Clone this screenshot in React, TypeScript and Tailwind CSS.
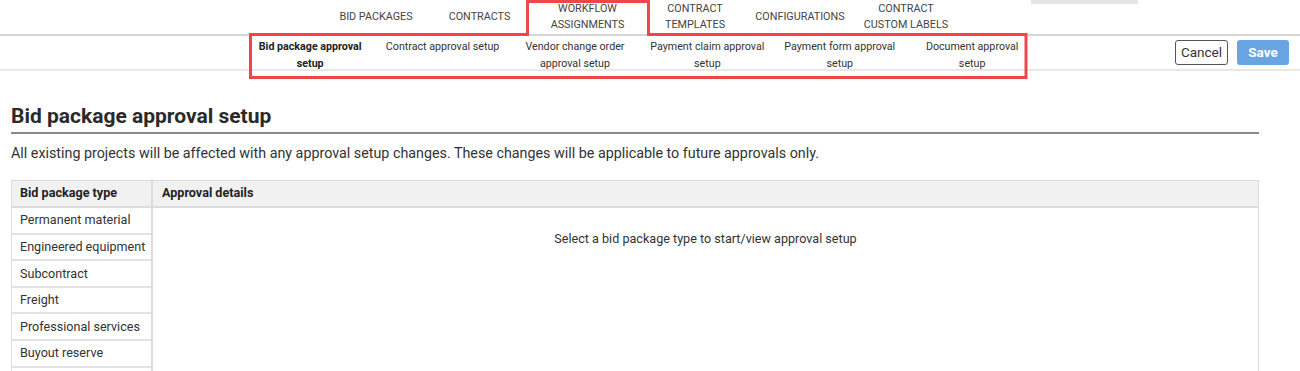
import React from "react";

const topTabs = [
  { label: ["BID PACKAGES"], w: "w-[112px]" },
  { label: ["CONTRACTS"], w: "w-[95px]" },
  { label: ["WORKFLOW", "ASSIGNMENTS"], w: "w-[121px]" },
  { label: ["CONTRACT", "TEMPLATES"], w: "w-[94px]" },
  { label: ["CONFIGURATIONS"], w: "w-[116px]" },
  { label: ["CONTRACT", "CUSTOM LABELS"], w: "w-[96px]" },
];

const subTabs = [
  ["Bid package approval", "setup"],
  ["Contract approval setup"],
  ["Vendor change order", "approval setup"],
  ["Payment claim approval", "setup"],
  ["Payment form approval", "setup"],
  ["Document approval", "setup"],
];

const types = [
  "Permanent material",
  "Engineered equipment",
  "Subcontract",
  "Freight",
  "Professional services",
  "Buyout reserve",
];

export default function App() {
  return (
    <div className="relative h-[371px] w-[1300px] overflow-hidden bg-white font-['Roboto',sans-serif] text-[#333]">
      {/* top nav */}
      <div className="flex h-[34px] pl-[320px]">
        {topTabs.map((t, i) => (
          <div
            key={i}
            className={`flex ${t.w} flex-col items-center justify-center text-[10.8px] leading-[16px] text-[#444]`}
          >
            {t.label.map((l) => (
              <span key={l}>{l}</span>
            ))}
          </div>
        ))}
        <div className="ml-[77px] h-[4px] w-[107px] bg-[#e4e4e4]" />
      </div>
      <div className="h-[2px] bg-[#d6d6d6]" />

      {/* sub nav */}
      <div className="flex h-[35px] items-start border-b-2 border-[#e8e8e8]">
        <div className="flex pl-[244px] pt-[2px]">
          {subTabs.map((s, i) => (
            <div
              key={i}
              className={`flex w-[132.4px] flex-col items-center text-[10.7px] leading-[17px] ${
                i === 0 ? "font-bold text-[#222]" : "text-[#333]"
              }`}
            >
              {s.map((l) => (
                <span key={l}>{l}</span>
              ))}
            </div>
          ))}
        </div>
        <div className="ml-auto mr-[11px] mt-[4px] flex gap-[9px]">
          <button className="h-[25px] w-[53px] rounded-[3px] border-[1.5px] border-[#555] bg-white text-[13.5px] text-[#333]">
            Cancel
          </button>
          <button className="h-[25px] w-[52px] rounded-[3px] bg-[#68a4e2] text-[13.5px] font-bold text-white">
            Save
          </button>
        </div>
      </div>

      {/* annotation outline */}
      <svg
        className="pointer-events-none absolute left-0 top-0"
        width="1300"
        height="90"
      >
        <path
          d="M527.5 1.5 H648.5 V34.5 H1026 V77.5 H250.5 V34.5 H527.5 Z"
          fill="none"
          stroke="#f0464a"
          strokeWidth="3"
        />
      </svg>

      {/* content */}
      <div className="w-[1259px] pl-[11px] pt-[33px]">
        <h1 className="border-b-2 border-[#8a8a8a] pb-[3px] text-[21px] font-bold leading-[25px] text-[#2a2a2a]">
          Bid package approval setup
        </h1>
        <p className="mt-[10px] text-[14.3px] leading-[18px] text-[#333]">
          All existing projects will be affected with any approval setup changes. These changes will be
          applicable to future approvals only.
        </p>

        <div className="mt-[18px] flex w-[1248px] border border-[#dcdcdc]">
          <div className="w-[141px] shrink-0 border-r-2 border-[#dcdcdc]">
            <div className="flex h-[27px] items-center border-b-2 border-[#dcdcdc] bg-[#f1f1f1] pl-[8px] text-[12.6px] font-bold text-[#222]">
              Bid package type
            </div>
            {types.map((t) => (
              <div
                key={t}
                className="flex h-[26.6px] items-center border-b-2 border-[#e2e2e2] pl-[8px] pt-[1px] text-[12.6px] text-[#333]"
              >
                {t}
              </div>
            ))}
            <div className="h-[26.6px]" />
          </div>
          <div className="flex-1">
            <div className="flex h-[27px] items-center border-b-2 border-[#dcdcdc] bg-[#f1f1f1] pl-[9px] text-[12.6px] font-bold text-[#222]">
              Approval details
            </div>
            <div className="pt-[22px] text-center text-[12.6px] text-[#333]">
              Select a bid package type to start/view approval setup
            </div>
          </div>
        </div>
      </div>
    </div>
  );
}
